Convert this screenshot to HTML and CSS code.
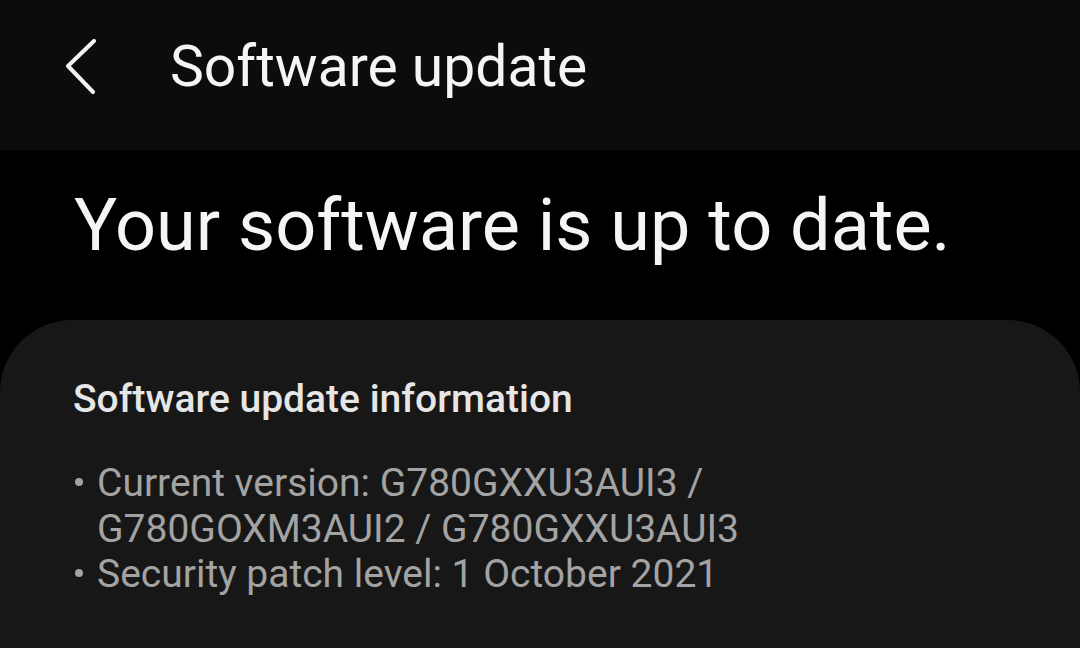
FILE: index.html
```html
<!DOCTYPE html>
<html>
<head>
<meta charset="utf-8">
<link rel="stylesheet" href="styles.css">
</head>
<body>
<div class="topbar">
  <div class="back">
    <svg width="30" height="56" viewBox="0 0 30 56"><polyline points="28,2 2,27 27,53" fill="none" stroke="#f2f2f2" stroke-width="4" stroke-linecap="round" stroke-linejoin="round"/></svg>
  </div>
  <h1 class="title">Software update</h1>
</div>
<div class="content">
  <h2 class="status">Your software is up to date.</h2>
  <div class="card">
    <h3 class="card-title">Software update information</h3>
    <ul class="info">
      <li>Current version: G780GXXU3AUI3 / G780GOXM3AUI2 / G780GXXU3AUI3</li>
      <li>Security patch level: 1 October 2021</li>
    </ul>
  </div>
</div>
</body>
</html>
```
FILE: styles.css
```css
body{
margin:0;
background:#000;
font-family:Roboto, 'Noto Sans', sans-serif;
color:#f5f5f5;
overflow:hidden;
height:648px;
}
.topbar{
height:150px;
box-sizing:border-box;
padding-top:32px;
background:#0c0c0c;
display:flex;
align-items:flex-start;
}
.back{
width:170px;
height:70px;
padding-left:66px;
box-sizing:border-box;
display:flex;
align-items:center;
flex-shrink:0;
}
.back svg{
display:block;
flex-shrink:0;
}
.title{
margin:0;
font-weight:400;
font-size:57px;
line-height:70px;
}
.content{
padding-top:26px;
}
.status{
margin:0 0 44px 74px;
font-weight:400;
font-size:72px;
line-height:100px;
}
.card{
background:#171717;
border-radius:72px 72px 0 0;
padding:57px 0 0 73px;
height:328px;
box-sizing:border-box;
}
.card-title{
margin:0 0 40px 0;
font-weight:500;
font-size:39px;
line-height:44px;
color:#e6e6e6;
}
.info{
list-style:none;
margin:0;
padding:0 300px 0 24px;
color:#a3a3a3;
font-size:39px;
line-height:45.5px;
}
.info li{
position:relative;
}
.info li::before{
content:"";
position:absolute;
left:-22px;
top:17px;
width:8px;
height:8px;
border-radius:50%;
background:#a3a3a3;
}
```
